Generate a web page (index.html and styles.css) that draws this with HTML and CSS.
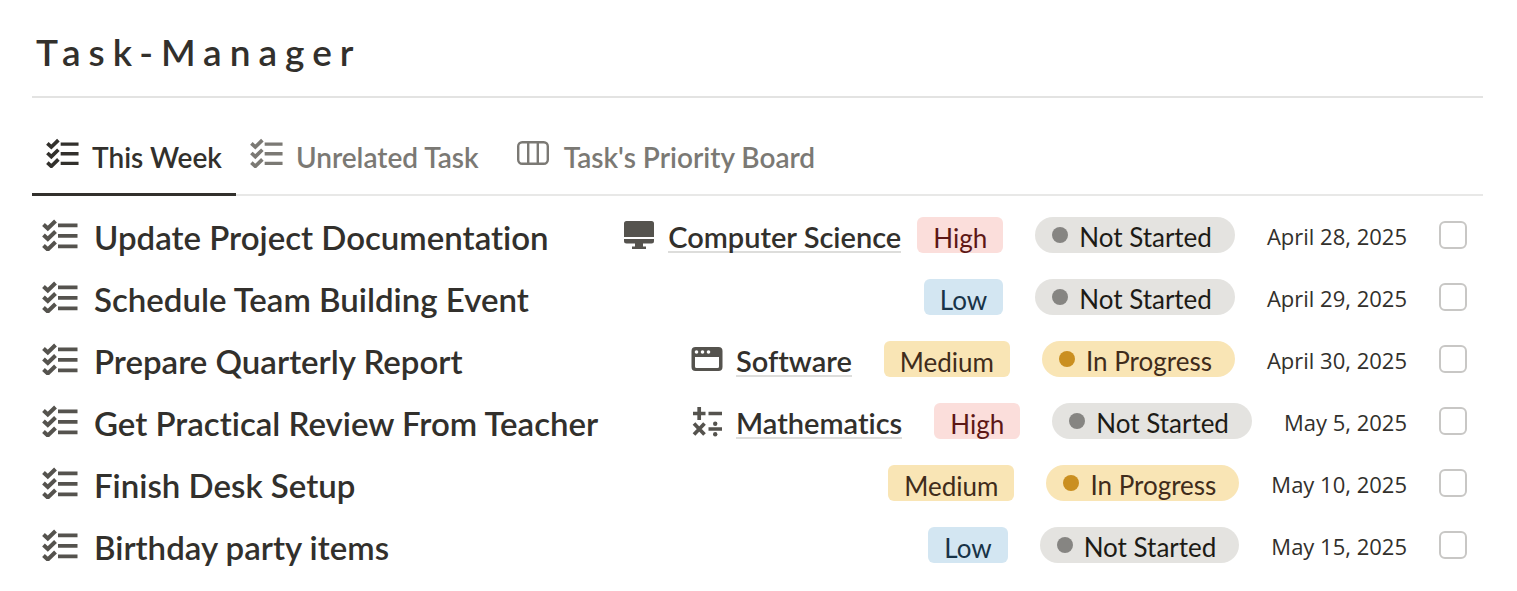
FILE: index.html
```
<!DOCTYPE html>
<html lang="en">
<head>
  <meta charset="utf-8">
  <title>Task-Manager</title>
  <link rel="stylesheet" href="styles.css">
</head>
<body>
  <svg class="sprite">
    <symbol id="icon-list" viewBox="0 0 36 32">
      <path d="M1.500 5.500l4.300 4L13.500 2M1.500 16l4.300 4L13.500 12.500M1.500 26.500l4.300 4L13.500 23" fill="none" stroke="currentColor" stroke-width="4"/>
      <path d="M16 4.500h19.500v3.700H16zM16 15h19.500v3.700H16zM16 25.500h19.500V29.200H16z" fill="currentColor"/>
    </symbol>
    <symbol id="icon-board" viewBox="0 0 32 24">
      <rect x="1.200" y="1.200" width="29.600" height="21.600" rx="4" fill="none" stroke="currentColor" stroke-width="2.400"/>
      <path d="M11.200 1v22M20.800 1v22" stroke="currentColor" stroke-width="2.400"/>
    </symbol>
    <symbol id="icon-computer" viewBox="0 0 32 32">
      <path d="M3.500 2h25a2.500 2.500 0 0 1 2.500 2.500v13.500H1V4.500A2.500 2.500 0 0 1 3.500 2zM1 20h30v2a2.500 2.500 0 0 1-2.500 2.500H20v3h3V30H9v-2.500h3v-3H3.500A2.500 2.500 0 0 1 1 22z" fill="currentColor"/>
    </symbol>
    <symbol id="icon-window" viewBox="0 0 32 32">
      <path fill-rule="evenodd" d="M4.500 4h23A4 4 0 0 1 31.500 8v16a4 4 0 0 1-4 4h-23a4 4 0 0 1-4-4V8a4 4 0 0 1 4-4zM4 14v9.500a1.500 1.500 0 0 0 1.500 1.500h21a1.500 1.500 0 0 0 1.500-1.500V14z" fill="currentColor"/>
      <g fill="#fff"><circle cx="5.500" cy="9" r="1.800"/><circle cx="11.500" cy="9" r="1.800"/><circle cx="17.500" cy="9" r="1.800"/></g>
    </symbol>
    <symbol id="icon-math" viewBox="0 0 32 32">
      <path d="M2 8.500h12.500M8.200 2v13M17.500 8.500H31M3 18.500l10.500 11M13.500 18.500L3 29.500M17.500 24H31" stroke="currentColor" stroke-width="3.700" fill="none"/>
      <circle cx="24.200" cy="18.800" r="2.200" fill="currentColor"/><circle cx="24.200" cy="29.300" r="2.200" fill="currentColor"/>
    </symbol>
  </svg>

  <main class="page">
    <h1 class="page-title">Task-Manager</h1>

    <nav class="tabs">
      <button class="tab active"><svg class="tab-icon"><use href="#icon-list"/></svg>This Week</button>
      <button class="tab"><svg class="tab-icon"><use href="#icon-list"/></svg>Unrelated Task</button>
      <button class="tab board"><svg class="tab-icon small"><use href="#icon-board"/></svg>Task's Priority Board</button>
    </nav>

    <ul class="tasks">
      <li class="task">
        <svg class="task-icon"><use href="#icon-list"/></svg>
        <label class="task-name" for="task1">Update Project Documentation</label>
        <a class="subject long" href="#"><svg class="subject-icon"><use href="#icon-computer"/></svg><span>Computer Science</span></a>
        <span class="tag red">High</span>
        <span class="status grey"><i class="dot"></i>Not Started</span>
        <time class="date">April 28, 2025</time>
        <input class="check" type="checkbox" id="task1">
      </li>
      <li class="task">
        <svg class="task-icon"><use href="#icon-list"/></svg>
        <label class="task-name" for="task2">Schedule Team Building Event</label>
        <span class="tag blue">Low</span>
        <span class="status grey"><i class="dot"></i>Not Started</span>
        <time class="date">April 29, 2025</time>
        <input class="check" type="checkbox" id="task2">
      </li>
      <li class="task">
        <svg class="task-icon"><use href="#icon-list"/></svg>
        <label class="task-name" for="task3">Prepare Quarterly Report</label>
        <a class="subject" href="#"><svg class="subject-icon"><use href="#icon-window"/></svg><span>Software</span></a>
        <span class="tag yellow">Medium</span>
        <span class="status yellow"><i class="dot"></i>In Progress</span>
        <time class="date">April 30, 2025</time>
        <input class="check" type="checkbox" id="task3">
      </li>
      <li class="task">
        <svg class="task-icon"><use href="#icon-list"/></svg>
        <label class="task-name" for="task4">Get Practical Review From Teacher</label>
        <a class="subject" href="#"><svg class="subject-icon"><use href="#icon-math"/></svg><span>Mathematics</span></a>
        <span class="tag red">High</span>
        <span class="status grey"><i class="dot"></i>Not Started</span>
        <time class="date">May 5, 2025</time>
        <input class="check" type="checkbox" id="task4">
      </li>
      <li class="task">
        <svg class="task-icon"><use href="#icon-list"/></svg>
        <label class="task-name" for="task5">Finish Desk Setup</label>
        <span class="tag yellow">Medium</span>
        <span class="status yellow"><i class="dot"></i>In Progress</span>
        <time class="date">May 10, 2025</time>
        <input class="check" type="checkbox" id="task5">
      </li>
      <li class="task">
        <svg class="task-icon"><use href="#icon-list"/></svg>
        <label class="task-name" for="task6">Birthday party items</label>
        <span class="tag blue">Low</span>
        <span class="status grey"><i class="dot"></i>Not Started</span>
        <time class="date">May 15, 2025</time>
        <input class="check" type="checkbox" id="task6">
      </li>
    </ul>
  </main>
</body>
</html>
```
FILE: styles.css
```
* {
  box-sizing: border-box;
}

body {
  margin: 0;
  background: #fff;
  color: #32302c;
  font-family: Lato, "Open Sans", sans-serif;
  font-variant-ligatures: none;
}

.sprite {
  display: none;
}

.page {
  padding: 8px 34px 0 32px;
}

.page-title {
  margin: 0;
  padding: 0 4px;
  border-bottom: 2px solid #e3e3e2;
  font-size: 37px;
  font-weight: 600;
  letter-spacing: 8px;
  line-height: 88px;
}

.tabs {
  display: flex;
  margin-top: 14px;
  border-bottom: 2px solid #e8e8e7;
}

.tab {
  display: flex;
  align-items: center;
  height: 84px;
  margin-bottom: -2px;
  padding: 8px 14px 0;
  border: none;
  border-bottom: 3px solid transparent;
  background: none;
  color: #7b7974;
  font-family: inherit;
  font-size: 28px;
  font-weight: 600;
  white-space: nowrap;
  cursor: pointer;
}

.tab.active {
  border-bottom-color: #32302c;
  color: #32302c;
}

.tab.board {
  margin-left: 10px;
}

.tab-icon {
  width: 33px;
  height: 30px;
  margin: 0 13px 8px 0;
}

.tab-icon.small {
  width: 32px;
  height: 24px;
  margin-right: 15px;
}

.tasks {
  margin: 0;
  padding: 8px 0 0;
  list-style: none;
}

.task {
  display: flex;
  align-items: center;
  height: 62px;
  padding: 0 16px 0 10px;
}

.task-icon {
  flex: none;
  width: 36px;
  height: 32px;
  margin-right: 16px;
  color: #55534e;
}

.task-name {
  flex: 1;
  padding-top: 4px;
  font-size: 33px;
  font-weight: 600;
  white-space: nowrap;
}

.subject {
  display: flex;
  align-items: center;
  min-width: 158px;
  margin-right: 32px;
  color: inherit;
  font-size: 29px;
  font-weight: 600;
  text-decoration: none;
  white-space: nowrap;
}

.subject.long {
  margin-right: 16px;
}

.subject-icon {
  width: 32px;
  height: 32px;
  margin-right: 13px;
  color: #55534e;
}

.subject span {
  margin-top: 6px;
  border-bottom: 2px solid #dddddb;
  line-height: 28px;
}

.tag,
.status {
  height: 36px;
  padding: 3px 16px 0;
  border-radius: 6px;
  font-size: 26px;
  line-height: 36px;
  white-space: nowrap;
}

.status {
  display: flex;
  align-items: center;
  margin: 0 32px;
  padding: 3px 23px 0 17px;
  border-radius: 18px;
}

.dot {
  width: 16px;
  height: 16px;
  margin: 0 11px 4px 0;
  border-radius: 50%;
  background: #868582;
}

.red {
  background: #fbdedb;
  color: #5d1715;
}

.blue {
  background: #d3e6f2;
  color: #183347;
}

.yellow {
  background: #f9e5b5;
  color: #402c1b;
}

.yellow .dot {
  background: #ca8f20;
}

.grey {
  background: #e4e3e0;
  color: #1d1b16;
}

.date {
  padding-top: 2px;
  font-family: "Open Sans", "Noto Sans", sans-serif;
  font-size: 22px;
  white-space: nowrap;
}

.check {
  flex: none;
  width: 28px;
  height: 28px;
  margin: 0 0 0 32px;
  border: 2px solid #c8c7c5;
  border-radius: 6px;
  background: #fff;
  appearance: none;
}

.check:checked {
  background: #2383e2;
  border-color: #2383e2;
}
```
